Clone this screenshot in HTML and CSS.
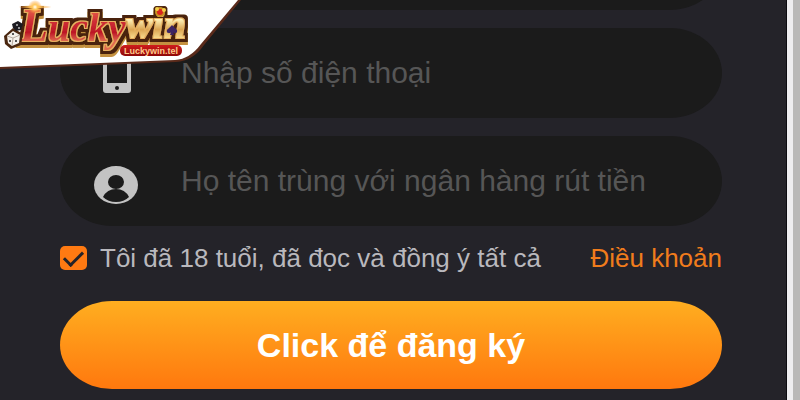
FILE: index.html
```html
<!DOCTYPE html>
<html lang="vi">
<head>
    <meta charset="UTF-8">
    <meta name="viewport" content="width=device-width, initial-scale=1.0">
    <title>Luckywin - Đăng ký</title>
    <link rel="stylesheet" href="styles.css">
</head>
<body>
    <svg class="brand" viewBox="0 0 250 75" role="img" aria-label="Luckywin">
        <defs>
            <linearGradient id="red" gradientUnits="userSpaceOnUse" x1="0" y1="6" x2="0" y2="50">
                <stop offset="0.1" stop-color="#e25a48"/>
                <stop offset="0.35" stop-color="#cf2f36"/>
                <stop offset="0.6" stop-color="#bd1626"/>
                <stop offset="0.8" stop-color="#e06a50"/>
            </linearGradient>
            <linearGradient id="gold" gradientUnits="userSpaceOnUse" x1="0" y1="10" x2="0" y2="40">
                <stop offset="0.3" stop-color="#fff6bd"/>
                <stop offset="0.65" stop-color="#dba552"/>
                <stop offset="1" stop-color="#ffe79a"/>
            </linearGradient>
            <linearGradient id="pill" x1="0" y1="0" x2="0" y2="1">
                <stop offset="0" stop-color="#cf1c1c"/>
                <stop offset="1" stop-color="#8e0808"/>
            </linearGradient>
            <radialGradient id="glow">
                <stop offset="0" stop-color="#fff"/>
                <stop offset="0.35" stop-color="#ffcb62"/>
                <stop offset="1" stop-color="#ff9a2e" stop-opacity="0"/>
            </radialGradient>
            <!-- gold rim, brown edge and gold depth under the letters -->
            <filter id="emboss" filterUnits="userSpaceOnUse" x="0" y="0" width="250" height="75">
                <feMorphology in="SourceAlpha" operator="dilate" radius="1" result="rim"/>
                <feMorphology in="SourceAlpha" operator="dilate" radius="4 4" result="edge"/>
                <feOffset in="edge" dy="3" result="depth"/>
                <feFlood flood-color="#e8b060"/>
                <feComposite in2="rim" operator="in" result="goldRim"/>
                <feFlood flood-color="#4a2108"/>
                <feComposite in2="edge" operator="in" result="brownEdge"/>
                <feFlood flood-color="#c4913f"/>
                <feComposite in2="depth" operator="in" result="goldDepth"/>
                <feMerge>
                    <feMergeNode in="goldDepth"/>
                    <feMergeNode in="brownEdge"/>
                    <feMergeNode in="goldRim"/>
                    <feMergeNode in="SourceGraphic"/>
                </feMerge>
            </filter>
        </defs>

        <!-- corner plate -->
        <path d="M0 0H241L204 45Q193 61 176 62L0 69Z" fill="#5a2a1a"/>
        <path d="M0 0H238L201 44Q190 59 175 60L0 67Z" fill="#fff"/>

        <text class="mark" x="20" y="41" filter="url(#emboss)"><tspan class="big">L</tspan>ucky<tspan class="gold" dy="-3">win</tspan></text>

        <!-- dice -->
        <path d="M4 36L13 28L23 34L21 45L11 49L5 44Z" fill="#4a2710"/>
        <path d="M7 36L13 31L20 35L19 43L12 46L8 43Z" fill="#f5f0ea"/>
        <path d="M7 36L13 38L20 35M13 38L12 46" stroke="#b5a99e" fill="none"/>
        <circle cx="13" cy="34" r="1" fill="#222"/>
        <circle cx="10" cy="41" r="1" fill="#222"/>
        <circle cx="16" cy="41" r="1" fill="#222"/>
        <path d="M12 24L18 21L23 24L21 30L16 31L13 28Z" fill="#1c1a20"/>
        <circle cx="17" cy="25" r="1" fill="#bbb"/>
        <circle cx="19" cy="28" r="1" fill="#bbb"/>

        <!-- sparkle and jewels -->
        <ellipse cx="35" cy="7" rx="17" ry="2" fill="url(#glow)"/>
        <circle cx="35" cy="7" r="7" fill="url(#glow)"/>
        <circle cx="160" cy="12" r="5" fill="#c9901f"/>
        <circle cx="160" cy="12" r="3" fill="#d8241f"/>
        <circle cx="157" cy="9" r="2" fill="#f5cf4a"/>
        <circle cx="164" cy="10" r="2" fill="#f5cf4a"/>
        <path d="M172 25C175 29 178 29 177 32C176 34 173 33 173 32L174 35H170L171 32C171 33 168 34 167 32C166 29 169 29 172 25Z" fill="#3d2463"/>

        <rect x="120" y="45" width="62" height="11" rx="5" fill="url(#pill)"/>
        <text class="domain" x="151" y="54">Luckywin.tel</text>
    </svg>

    <form class="register">
        <div class="field">
            <input type="text" aria-label="Tài khoản">
        </div>

        <div class="field">
            <svg class="icon" viewBox="0 0 44 44" aria-hidden="true">
                <path fill="#c3c3c3" fill-rule="evenodd" d="M12 0H34Q37 0 37 3V35Q37 38 34 38H12Q9 38 9 35V3Q9 0 12 0ZM13 5V28H33V5ZM23 31A2 2 0 1 0 23 35A2 2 0 1 0 23 31Z"/>
            </svg>
            <input type="tel" placeholder="Nhập số điện thoại" aria-label="Số điện thoại">
        </div>

        <div class="field">
            <svg class="icon" viewBox="0 0 44 44" aria-hidden="true">
                <ellipse cx="22" cy="22" rx="22" ry="19" fill="#c3c3c3"/>
                <ellipse cx="22" cy="19" rx="8" ry="7" fill="#1b1b1b"/>
                <path d="M9 34Q13 26 22 26T35 34Q30 39 22 39T9 34Z" fill="#1b1b1b"/>
            </svg>
            <input type="text" placeholder="Họ tên trùng với ngân hàng rút tiền" aria-label="Họ tên">
        </div>

        <div class="agree">
            <input type="checkbox" id="agree" checked>
            <label for="agree">Tôi đã 18 tuổi, đã đọc và đồng ý tất cả</label>
            <a href="#">Điều khoản</a>
        </div>

        <button type="submit" class="submit">Click để đăng ký</button>
    </form>

    <div class="scrollbar"></div>
</body>
</html>
```

FILE: styles.css
```css
* {
    box-sizing: border-box;
}

body {
    margin: 0;
    height: 100vh;
    display: flex;
    align-items: flex-end;
    overflow: hidden;
    background-color: #242329;
    font-family: "Liberation Sans", Arial, sans-serif;
}

/* Logo in the corner, over the form */
.brand {
    position: absolute;
    top: 0;
    left: 0;
    width: 250px;
    height: 75px;
}

.mark {
    font-family: "Liberation Serif", serif;
    font-size: 40px;
    font-weight: bold;
    font-style: italic;
    fill: url(#red);
}

.mark .big {
    font-size: 46px;
}

.mark .gold {
    fill: url(#gold);
}

.domain {
    font-size: 9px;
    font-weight: bold;
    text-anchor: middle;
    fill: #ffc98a;
}

/* Form */
.register {
    flex: 1;
    display: flex;
    flex-direction: column;
    gap: 18px;
    padding: 0 64px 11px 60px;
}

.field {
    display: flex;
    align-items: center;
    gap: 43px;
    height: 90px;
    flex-shrink: 0;
    padding: 0 34px;
    border-radius: 52px / 45px;
    background-color: #1b1b1b;
}

.icon {
    width: 44px;
    height: 44px;
    flex-shrink: 0;
    margin-top: 8px;
}

.field input {
    flex: 1;
    min-width: 0;
    padding: 0;
    border: 0;
    outline: 0;
    background: none;
    color: #ccc;
    font-family: inherit;
    font-size: 30px;
}

.field input::placeholder {
    color: #565656;
    opacity: 1;
}

.agree {
    display: flex;
    align-items: center;
    height: 28px;
    margin-bottom: 11px;
    color: #b9b8bd;
    font-size: 26px;
}

.agree input {
    appearance: none;
    display: grid;
    place-items: center;
    width: 27px;
    height: 24px;
    margin: 0 13px 0 0;
    border-radius: 5px;
    background-color: #ff7a12;
}

.agree input:checked::before {
    content: "";
    width: 16px;
    height: 8px;
    border: solid #242329;
    border-width: 0 0 3px 3px;
    transform: translateY(-2px) rotate(-45deg);
}

.agree a {
    margin-left: auto;
    color: #f07c1c;
    text-decoration: none;
}

.submit {
    height: 88px;
    border: 0;
    border-radius: 52px / 44px;
    background-image: linear-gradient(#ffae20, #ff780e);
    color: #fff;
    font-family: inherit;
    font-size: 34px;
    font-weight: bold;
    cursor: pointer;
}

.scrollbar {
    width: 14px;
    align-self: stretch;
    border-left: 1px solid #0c0b10;
    background: linear-gradient(to right, #eeedf0 6px, #b9b8b8 6px);
}
```
